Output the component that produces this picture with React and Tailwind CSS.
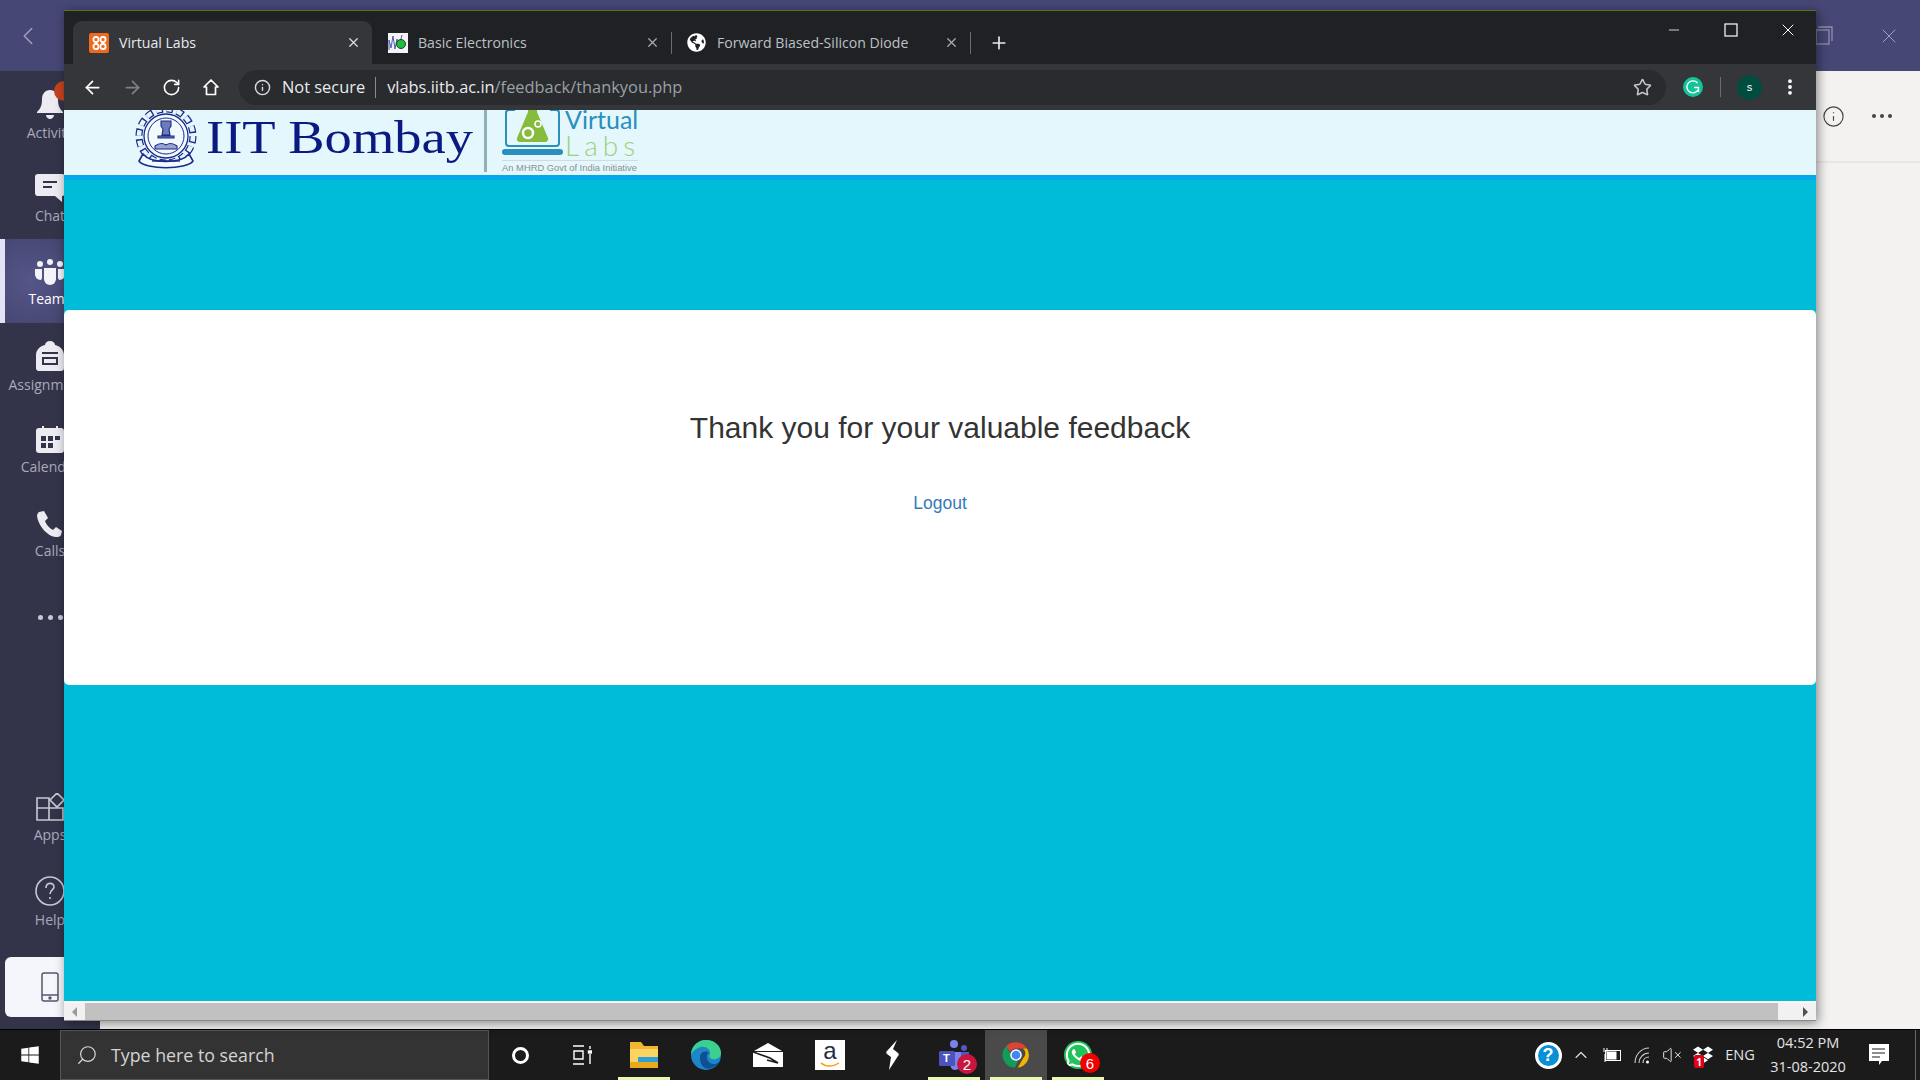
import React from "react";
import {
  ArrowLeft,
  ArrowRight,
  ChevronLeft,
  ChevronUp,
  Info,
  Minus,
  MoreVertical,
  Plus,
  RotateCw,
  Search,
  Star,
  VolumeX,
  X,
} from "lucide-react";
import { FaDropbox, FaGlobeAmericas, FaWhatsapp, FaWindows } from "react-icons/fa";

const ui = "font-['Open_Sans',sans-serif]";

function Bell() {
  return (
    <svg width="28" height="30" viewBox="0 0 28 30" fill="#ecebf2">
      <path d="M14 1c-5 0-8 4-8 9 0 6-1 9-5 13v1h26v-1c-4-4-5-7-5-13 0-5-3-9-8-9z" />
      <path d="M10 26h8c0 2-2 4-4 4s-4-2-4-4z" />
    </svg>
  );
}

function Chat() {
  return (
    <svg width="30" height="28" viewBox="0 0 30 28">
      <path d="M3 0h24a3 3 0 013 3v16a3 3 0 01-3 3v6l-7-6H3a3 3 0 01-3-3V3a3 3 0 013-3z" fill="#ecebf2" />
      <path d="M8 8h14M8 13h9" stroke="#33344a" strokeWidth="2" />
    </svg>
  );
}

function Teams() {
  return (
    <svg width="30" height="26" viewBox="0 0 30 26" fill="#f3f3f8">
      <circle cx="15" cy="3" r="3" />
      <circle cx="5" cy="5" r="3" />
      <circle cx="25" cy="5" r="3" />
      <path d="M9 9h12v11a6 6 0 01-12 0z" />
      <path d="M0 10h7v9l-1 2c-4 0-6-3-6-6zM30 10h-7v9l1 2c4 0 6-3 6-6z" />
    </svg>
  );
}

function Backpack() {
  return (
    <svg width="28" height="30" viewBox="0 0 28 30">
      <path d="M14 0c3 0 5 2 5 4 5 1 9 5 9 10v13a3 3 0 01-3 3H3a3 3 0 01-3-3V14C0 9 4 5 9 4c0-2 2-4 5-4z" fill="#ecebf2" />
      <path d="M6 12h16M7 17h14v6H7z" fill="none" stroke="#33344a" strokeWidth="2" />
    </svg>
  );
}

function Calendar() {
  return (
    <svg width="28" height="27" viewBox="0 0 28 27">
      <path d="M3 2h22a3 3 0 013 3v19a3 3 0 01-3 3H3a3 3 0 01-3-3V5a3 3 0 013-3z" fill="#ecebf2" />
      <path d="M7 0v5M21 0v5" stroke="#ecebf2" strokeWidth="2" />
      <path d="M5 10h5v5H5zM12 10h5v5h-5zM19 10h5v4h-5zM5 17h5v5H5zM12 17h5v5h-5z" fill="#33344a" />
    </svg>
  );
}

function Phone() {
  return (
    <svg width="26" height="26" viewBox="0 0 26 26" fill="#ecebf2">
      <path d="M2 1l5-1 4 7-3 3c1 3 4 7 8 9l3-3 6 4-1 4c-1 2-3 2-5 2C9 25 1 13 0 5c0-2 1-3 2-4z" />
    </svg>
  );
}

function Apps() {
  return (
    <svg width="28" height="28" viewBox="0 0 28 28" fill="none" stroke="#c8c8d4" strokeWidth="1.6">
      <path d="M1 5h12v10H1zM1 15h12v12H1zM13 15h14v12H13zM21 0l7 7-7 7-7-7z" />
    </svg>
  );
}

function HelpCircle() {
  return (
    <svg width="30" height="30" viewBox="0 0 30 30" fill="none" stroke="#c8c8d4" strokeWidth="1.6">
      <circle cx="15" cy="15" r="14" />
      <path d="M11 12c0-6 8-6 8-1 0 3-4 3-4 7M15 21v2" />
    </svg>
  );
}

function RailItem({ icon, label, active }) {
  return (
    <div className={`relative flex h-[84px] flex-col items-center justify-center gap-[5px] pt-[4px] ${active ? "bg-[radial-gradient(circle_at_30%_50%,#555689,#3c3d62)]" : ""}`}>
      {active && <div className="absolute bottom-0 left-0 top-0 w-[5px] bg-[#e2e2f6]" />}
      {icon}
      <span className={`text-[14px] leading-[18px] ${ui} ${active ? "text-white" : "text-[#a9a9bb]"}`}>{label}</span>
    </div>
  );
}

function Rail() {
  return (
    <aside className="flex w-[100px] flex-col bg-[#33344a]">
      <RailItem
        label="Activity"
        icon={
          <div className="relative">
            <Bell />
            <div className="absolute right-[-10px] top-[-8px] h-[20px] w-[20px] rounded-full bg-[#c4431f]" />
          </div>
        }
      />
      <RailItem label="Chat" icon={<Chat />} />
      <RailItem label="Teams" icon={<Teams />} active />
      <RailItem label="Assignments" icon={<Backpack />} />
      <RailItem label="Calendar" icon={<Calendar />} />
      <RailItem label="Calls" icon={<Phone />} />
      <div className="flex h-[84px] items-center justify-center gap-[5px]">
        <span className="h-[5px] w-[5px] rounded-full bg-[#c8c8d4]" />
        <span className="h-[5px] w-[5px] rounded-full bg-[#c8c8d4]" />
        <span className="h-[5px] w-[5px] rounded-full bg-[#c8c8d4]" />
      </div>
      <div className="flex-1" />
      <RailItem label="Apps" icon={<Apps />} />
      <RailItem label="Help" icon={<HelpCircle />} />
      <div className="mb-[12px] ml-[5px] mt-[15px] flex h-[60px] items-center justify-center rounded-[6px] bg-[#f5f5fc] pr-[5px]">
        <svg width="18" height="30" viewBox="0 0 18 30" fill="none" stroke="#55566f" strokeWidth="1.5">
          <rect x="1" y="1" width="16" height="28" rx="2" />
          <path d="M1 23h16" />
          <circle cx="9" cy="26" r="1" fill="#55566f" />
        </svg>
      </div>
    </aside>
  );
}

function XamppIcon() {
  return (
    <div className="flex h-[20px] w-[20px] items-center justify-center rounded-[2px] bg-[#ee6a1f]">
      <svg width="15" height="14" viewBox="0 0 15 14" fill="none" stroke="#fff" strokeWidth="1.8">
        <rect x="1.5" y="1" width="5" height="5" rx="2" />
        <rect x="8.5" y="1" width="5" height="5" rx="2" />
        <rect x="1.5" y="8" width="5" height="5" rx="2" />
        <rect x="8.5" y="8" width="5" height="5" rx="2" />
      </svg>
    </div>
  );
}

function ElectronicsIcon() {
  return (
    <svg width="20" height="20" viewBox="0 0 20 20">
      <rect width="20" height="20" fill="#f4f4f8" />
      <path d="M1 17V7l2 8 2-12 2 13 2-10 2 8 3-12" fill="none" stroke="#4a5fa8" strokeWidth="1" />
      <circle cx="13" cy="11" r="4.5" fill="#19c23a" stroke="#333" strokeWidth="1" />
    </svg>
  );
}

function Tab({ icon, title, active, sep }) {
  return (
    <div className={`relative flex h-[43px] w-[299px] items-center pl-[16px] ${active ? "rounded-t-[9px] bg-[#35363a]" : ""}`}>
      <div className="flex w-[30px] shrink-0">{icon}</div>
      <span className={`flex-1 text-[14.1px] ${ui} ${active ? "text-[#e8eaed]" : "text-[#bdc1c6]"}`}>{title}</span>
      <X size={15} className={`mr-[11px] ${active ? "text-[#dadce0]" : "text-[#a8abb0]"}`} />
      {sep && <div className="absolute right-[-1px] top-[11px] h-[22px] w-px bg-[#6a6c70]" />}
    </div>
  );
}

function TabStrip() {
  return (
    <div className="flex h-[53px] shrink-0 items-end bg-[#202124] pl-[9px]">
      <Tab icon={<XamppIcon />} title="Virtual Labs" active />
      <Tab icon={<ElectronicsIcon />} title="Basic Electronics" sep />
      <Tab icon={<FaGlobeAmericas size={19} color="#fff" />} title="Forward Biased-Silicon Diode" sep />
      <div className="flex h-[43px] w-[57px] items-center justify-center">
        <Plus size={20} className="text-[#e8eaed]" />
      </div>
      <div className="flex-1" />
      <div className="flex h-[53px] items-start pt-[6px] text-white">
        <div className="flex h-[26px] w-[57px] items-center justify-center">
          <Minus size={16} strokeWidth={1.2} />
        </div>
        <div className="flex h-[26px] w-[57px] items-center justify-center">
          <svg width="14" height="14" viewBox="0 0 14 14" fill="none" stroke="#fff" strokeWidth="1.2">
            <rect x="1" y="1" width="12" height="12" />
          </svg>
        </div>
        <div className="flex h-[26px] w-[57px] items-center justify-center">
          <X size={20} strokeWidth={1.2} />
        </div>
      </div>
    </div>
  );
}

function Toolbar() {
  return (
    <div className="flex h-[46px] shrink-0 items-center bg-[#35363a] pl-[18px]">
      <div className="flex w-[40px]"><ArrowLeft size={21} className="text-white" /></div>
      <div className="flex w-[40px]"><ArrowRight size={21} className="text-[#7f8185]" /></div>
      <div className="flex w-[40px]"><RotateCw size={19} className="text-white" /></div>
      <div className="flex w-[28px]">
        <svg width="18" height="18" viewBox="0 0 18 18" fill="none" stroke="#fff" strokeWidth="1.7">
          <path d="M9 2L2 9h2.5v7.5h9V9H16z" strokeLinejoin="round" />
        </svg>
      </div>
      <div className="ml-[9px] flex h-[35px] w-[1427px] items-center rounded-full bg-[#292b2e] pl-[15px]">
        <Info size={17} className="text-[#dadce0]" />
        <span className={`ml-[11px] text-[16.4px] text-[#e8eaed] ${ui}`}>Not secure</span>
        <div className="ml-[10px] h-[21px] w-px bg-[#8a8c90]" />
        <span className={`ml-[11px] text-[16.4px] text-[#e8eaed] ${ui}`}>
          vlabs.iitb.ac.in<span className="text-[#9aa0a6]">/feedback/thankyou.php</span>
        </span>
        <div className="flex-1" />
        <Star size={19} className="mr-[14px] text-[#c4c7cb]" />
      </div>
      <svg width="20" height="20" viewBox="0 0 20 20" fill="none" className="ml-[17px]">
        <circle cx="10" cy="10" r="10" fill="#15c39a" />
        <path d="M14.5 6a6 6 0 10.8 6.5M11 10.5h4.5V15" stroke="#fff" strokeWidth="1.4" />
      </svg>
      <div className="ml-[17px] h-[20px] w-px bg-[#6a6c70]" />
      <div className="ml-[16px] flex h-[25px] w-[25px] items-center justify-center rounded-full bg-[#004d40]">
        <span className="font-['Liberation_Sans',sans-serif] text-[11px] text-white">s</span>
      </div>
      <MoreVertical size={20} strokeWidth={2.6} className="ml-[18px] text-white" />
    </div>
  );
}

function Emblem() {
  return (
    <svg width="68" height="60" viewBox="0 0 68 60" fill="none" stroke="#1c2a8c" className="shrink-0">
      <circle cx="34" cy="26" r="27" strokeWidth="7" strokeDasharray="7 3.6" />
      <circle cx="34" cy="26" r="27" strokeWidth="4.6" strokeDasharray="5.6 5" stroke="#e4f7fc" />
      <circle cx="34" cy="26" r="22" strokeWidth="1.3" fill="#f1fafd" />
      <circle cx="34" cy="26" r="18" strokeWidth="1" />
      <path d="M29 11h10v5l-2 3 1 6h-8l1-6-2-3zM26 26h16v2H26z" strokeWidth="1.1" fill="#6f7ab8" />
      <path d="M23 36c4-3 8-3 11-1 3-2 7-2 11 1v3H23z" strokeWidth="1.1" fill="#9aa3d0" />
      <path d="M11 44c8 10 38 10 46 0l4 7c-6 9-48 9-54 0z" strokeWidth="1.6" fill="#f1fafd" />
      <path d="M20 51h28" strokeWidth="1.4" />
    </svg>
  );
}

function LabsLaptop() {
  return (
    <svg width="61" height="46" viewBox="0 0 61 46" fill="none" className="shrink-0">
      <path d="M13 0H7a3 3 0 00-3 3v30a3 3 0 003 3h47a3 3 0 003-3V3a3 3 0 00-3-3h-6" stroke="#2a8fbd" strokeWidth="2" />
      <path d="M26-4h9v6l11 26a3 3 0 01-3 4H18a3 3 0 01-3-4L26 2z" fill="#86bc3c" />
      <circle cx="26" cy="23" r="5" fill="none" stroke="#fff" strokeWidth="2.5" />
      <circle cx="36" cy="14" r="3" fill="none" stroke="#fff" strokeWidth="1.6" />
      <rect x="0" y="39" width="61" height="6" rx="3" fill="#2a8fbd" />
    </svg>
  );
}

function SiteHeader() {
  return (
    <div className="h-[65px] shrink-0 overflow-hidden bg-[#e4f7fc]">
      <div className="flex items-start pl-[68px]">
        <Emblem />
        <div className="ml-[6px] w-[278px] shrink-0 pt-[4px]">
          <div className="origin-left scale-x-[1.16] whitespace-nowrap font-['Liberation_Serif',serif] text-[47px] leading-none text-[#0b1a82]">
            IIT Bombay
          </div>
        </div>
        <div className="h-[62px] w-[3px] shrink-0 bg-[#8fb0b4]" />
        <div className="ml-[15px]">
          <div className="flex h-[46px]">
            <LabsLaptop />
            <div className="ml-[2px] flex w-[73px] flex-col">
              <span className="mt-[-3px] font-['Lato',sans-serif] text-[25px] leading-[24px] text-[#2a8fbd]">Virtual</span>
              <span className="font-['Lato',sans-serif] text-[28px] font-light leading-[28px] tracking-[5px] text-[#9ed07c]">Labs</span>
            </div>
          </div>
          <div className="mt-[4px] h-px w-[136px] bg-[#cfdcdc]" />
          <div className="mt-[2px] whitespace-nowrap font-['Liberation_Sans',sans-serif] text-[9.4px] leading-[10px] text-[#8a8f90]">
            An MHRD Govt of India Initiative
          </div>
        </div>
      </div>
    </div>
  );
}

function ScrollBar() {
  return (
    <div className="flex h-[18px] shrink-0 items-center border-b border-[#8a8a8a] bg-[#f1f1f1]">
      <div className="flex w-[21px] justify-center">
        <div className="h-0 w-0 border-y-[5px] border-r-[5px] border-y-transparent border-r-[#9a9a9a]" />
      </div>
      <div className="h-full w-[1693px] bg-[#c1c1c1]" />
      <div className="flex flex-1 justify-end pr-[8px]">
        <div className="h-0 w-0 border-y-[5px] border-l-[5px] border-y-transparent border-l-[#505050]" />
      </div>
    </div>
  );
}

function BrowserWindow() {
  return (
    <div className="absolute left-[64px] top-[10px] flex h-[1011px] w-[1752px] flex-col border-t border-[#5f7020] bg-white shadow-[2px_2px_10px_rgba(0,0,0,0.45)]">
      <TabStrip />
      <Toolbar />
      <SiteHeader />
      <div className="h-[5px] shrink-0 bg-[#03a9e8]" />
      <div className="flex flex-1 flex-col bg-[#00bcd8] pt-[130px]">
        <div className="flex h-[375px] flex-col items-center rounded-[5px] bg-white pt-[100px] font-['Liberation_Sans',sans-serif]">
          <h1 className="text-[30px] leading-[36px] text-[#333]">Thank you for your valuable feedback</h1>
          <a className="mt-[45px] text-[17.5px] leading-[24px] text-[#337ab7]">Logout</a>
        </div>
        <div className="flex-1" />
        <div className="h-[2px] bg-white" />
      </div>
      <ScrollBar />
    </div>
  );
}

function Cell({ children, active, line }) {
  return (
    <div className={`relative flex h-full w-[62px] items-center justify-center ${active ? "bg-[#4a4a4a]" : ""}`}>
      {children}
      {line && <div className="absolute bottom-0 left-[5px] right-[5px] h-[3px] bg-[#e6f8b6]" />}
    </div>
  );
}

function Badge({ n, color }) {
  return (
    <div className={`absolute bottom-[-4px] right-[-8px] flex h-[20px] w-[20px] items-center justify-center rounded-full font-['Liberation_Sans',sans-serif] text-[15px] leading-none text-white ${color}`}>
      {n}
    </div>
  );
}

function ChromeIcon() {
  return (
    <svg width="28" height="28" viewBox="0 0 48 48">
      <path d="M24 2a22 22 0 0119 11H24a11 11 0 00-10 6L7 9A22 22 0 0124 2z" fill="#db4437" />
      <path d="M43 13a22 22 0 01-16 33l9-16a11 11 0 000-17z" fill="#f4b400" />
      <path d="M7 9l10 17a11 11 0 0010 9l-5 11A22 22 0 017 9z" fill="#0f9d58" />
      <circle cx="24" cy="24" r="10" fill="#fff" />
      <circle cx="24" cy="24" r="7.5" fill="#4285f4" />
    </svg>
  );
}

function EdgeIcon() {
  return (
    <svg width="30" height="30" viewBox="0 0 30 30">
      <circle cx="15" cy="15" r="15" fill="#1d86c9" />
      <path d="M15 0c9 0 15 6 15 13 0 5-5 7-9 6-3-1-3-3-2-5 1-4-4-8-9-7C5 8 1 12 0 15 0 7 6 0 15 0z" fill="#3bd08f" />
      <path d="M9 17c0-5 6-7 9-4-3 1-3 7 1 10 3 2 7 1 9-1-3 5-9 8-14 6-4-2-5-7-5-11z" fill="#0f4f93" />
    </svg>
  );
}

function TeamsTask() {
  return (
    <div className="relative">
      <svg width="30" height="30" viewBox="0 0 30 30" fill="#5059c9">
        <circle cx="15" cy="4" r="4" fill="#7b83eb" />
        <circle cx="25" cy="8" r="3" />
        <path d="M17 12h13v9c0 3-3 5-6 5h-7z" />
        <path d="M11 12h11v12c0 3-3 6-6 6s-5-3-5-6z" fill="#7b83eb" />
        <rect x="0" y="11" width="16" height="15" rx="1.5" fill="#4b53bc" />
      </svg>
      <span className="absolute left-[4px] top-[12px] font-['Liberation_Sans',sans-serif] text-[11px] font-bold leading-[12px] text-white">T</span>
      <Badge n="2" color="bg-[#c8173e]" />
    </div>
  );
}

function Taskbar() {
  return (
    <div className="flex h-[51px] shrink-0 items-stretch border-t border-black bg-[#1b1b1b]">
      <div className="flex w-[60px] items-center justify-center">
        <FaWindows size={20} color="#fff" />
      </div>
      <div className="flex w-[429px] items-center border border-[#555] bg-[#333] pl-[15px]">
        <Search size={22} strokeWidth={1.3} className="-scale-x-100 text-[#d8d8d8]" />
        <span className={`ml-[13px] text-[17.8px] text-[#d4d4d4] ${ui}`}>Type here to search</span>
      </div>
      <Cell>
        <div className="h-[17px] w-[17px] rounded-full border-[3px] border-white" />
      </Cell>
      <Cell>
        <svg width="20" height="20" viewBox="0 0 20 20" fill="none" stroke="#fff" strokeWidth="1.4">
          <path d="M1 1h11M1 19h11M2 6h9v8H2zM18 1v3M18 9v10" />
          <rect x="16.5" y="6" width="3" height="2" fill="#fff" />
        </svg>
      </Cell>
      <Cell line>
        <svg width="28" height="26" viewBox="0 0 28 26">
          <path d="M0 0h11l3 4h14v22H0z" fill="#f0b62f" />
          <rect x="0" y="7" width="28" height="19" fill="#fcd462" />
          <rect x="8" y="15" width="20" height="5" fill="#2d9fd9" />
          <rect x="0" y="20" width="28" height="6" fill="#e9a91f" />
        </svg>
      </Cell>
      <Cell>
        <EdgeIcon />
      </Cell>
      <Cell>
        <svg width="30" height="24" viewBox="0 0 30 24" fill="#fff">
          <path d="M15 0l14 8H1z" />
          <path d="M0 9h30v15H0z" />
          <path d="M0 9l17 6 8 5-11-3" fill="none" stroke="#1b1b1b" strokeWidth="1.6" />
        </svg>
      </Cell>
      <Cell>
        <div className="flex h-[30px] w-[30px] flex-col items-center bg-white">
          <span className="font-['Liberation_Sans',sans-serif] text-[24px] leading-[22px] text-[#232f3e]">a</span>
          <svg width="20" height="6" viewBox="0 0 20 6" fill="none" stroke="#f90" strokeWidth="1.5">
            <path d="M1 1c5 4 12 4 18 0" />
          </svg>
        </div>
      </Cell>
      <Cell>
        <svg width="14" height="30" viewBox="0 0 14 30" fill="#fff">
          <path d="M12 0L2 11c-1 1-1 2 0 3l4 3-2 13 9-14c1-1 1-2 0-3L8 9z" />
        </svg>
      </Cell>
      <Cell line>
        <TeamsTask />
      </Cell>
      <Cell active line>
        <ChromeIcon />
      </Cell>
      <Cell line>
        <div className="relative">
          <FaWhatsapp size={28} className="rounded-full bg-[#21c45a] text-white" />
          <Badge n="6" color="bg-[#f20000]" />
        </div>
      </Cell>
      <div className="flex-1" />
      <Tray />
    </div>
  );
}

function Tray() {
  return (
    <div className={`flex items-center text-[#e4e4e4] ${ui}`}>
      <div className="flex w-[34px] justify-center">
        <div className="flex h-[27px] w-[27px] items-center justify-center rounded-full border-[3px] border-white bg-[#0a8fd6] font-['Liberation_Sans',sans-serif] text-[18px] font-bold leading-none text-white">?</div>
      </div>
      <div className="flex w-[32px] justify-center"><ChevronUp size={20} strokeWidth={1.3} /></div>
      <div className="flex w-[30px] justify-center">
        <svg width="20" height="14" viewBox="0 0 20 14" fill="none" stroke="#fff">
          <rect x="3.5" y="2.5" width="15" height="10" />
          <rect x="5" y="4" width="9" height="7" fill="#fff" />
          <path d="M2 0v4M5 0v4M3 6v8" />
        </svg>
      </div>
      <div className="flex w-[30px] justify-center">
        <svg width="16" height="17" viewBox="0 0 16 17" fill="none" stroke="#cfcfcf" strokeWidth="1.1">
          <path d="M1 16C1 8 7 1 15 1M5 16c0-5 4-10 10-10M9 16c0-3 2-6 6-6" />
          <circle cx="13.5" cy="15" r="1.5" fill="#fff" stroke="none" />
        </svg>
      </div>
      <div className="flex w-[30px] justify-center"><VolumeX size={20} strokeWidth={1.2} /></div>
      <div className="relative flex w-[32px] justify-center">
        <FaDropbox size={20} color="#fff" />
        <div className="absolute left-[7px] top-[10px] flex h-[13px] w-[10px] items-center justify-center rounded-[2px] bg-[#e2001a] text-[10px] font-bold leading-none text-white">1</div>
      </div>
      <div className="w-[42px] text-center text-[14.5px]">ENG</div>
      <div className="flex w-[94px] flex-col items-center text-[14.5px] leading-[24px]">
        <span>04:52 PM</span>
        <span>31-08-2020</span>
      </div>
      <div className="flex w-[48px] justify-center">
        <svg width="20" height="22" viewBox="0 0 20 22">
          <path d="M0 0h20v17h-7l-3 4v-4H0z" fill="#fff" />
          <path d="M3 5h13M3 9h13M3 13h8" stroke="#1b1b1b" />
        </svg>
      </div>
      <div className="ml-[12px] h-full w-[5px] border-l border-[#666]" />
    </div>
  );
}

export default function App() {
  return (
    <div className="relative flex h-screen w-full flex-col overflow-hidden bg-[#f3f2f1]">
      <div className="flex h-[71px] shrink-0 items-center justify-between bg-[#464775]">
        <ChevronLeft size={30} strokeWidth={1.2} className="ml-[13px] text-[#a0a1bd]" />
        <div className="flex items-center">
          <svg width="18" height="20" viewBox="0 0 18 20" fill="none" stroke="#8f90b0" strokeWidth="1.3">
            <path d="M3 1h14v14" />
            <rect x="1" y="4" width="13" height="14" />
          </svg>
          <X size={24} strokeWidth={1} className="ml-[44px] mr-[19px] text-[#a0a1bd]" />
        </div>
      </div>
      <div className="flex min-h-0 flex-1">
        <Rail />
        <main className="flex flex-1 flex-col">
          <div className="flex h-[92px] items-center justify-end gap-[27px] border-b-2 border-[#e8e6e4] pr-[28px]">
            <Info size={23} strokeWidth={1.2} className="text-[#444]" />
            <div className="flex gap-[4px]">
              <span className="h-[4px] w-[4px] rounded-full bg-[#444]" />
              <span className="h-[4px] w-[4px] rounded-full bg-[#444]" />
              <span className="h-[4px] w-[4px] rounded-full bg-[#444]" />
            </div>
          </div>
          <div className="flex-1" />
          <div className="h-[8px] w-[420px] bg-[#efefef]" />
        </main>
      </div>
      <Taskbar />
      <BrowserWindow />
    </div>
  );
}
